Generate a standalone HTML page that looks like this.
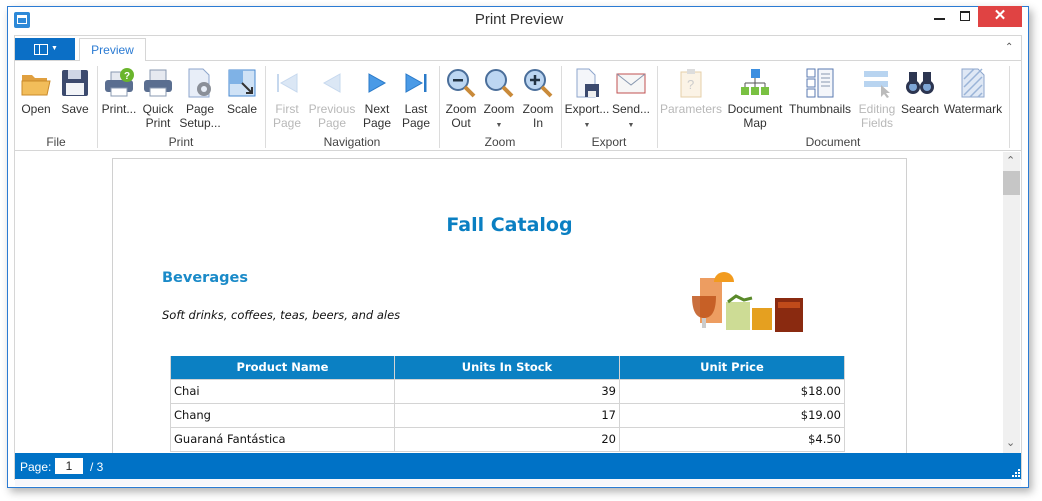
<!DOCTYPE html>
<html><head><meta charset="utf-8"><style>
*{margin:0;padding:0;box-sizing:border-box}
body{width:1042px;height:501px;background:#fff;position:relative;overflow:hidden;font-family:"Liberation Sans",sans-serif;font-size:12px;color:#222}
.a{position:absolute}
.win{left:7px;top:6px;width:1022px;height:482px;border:1px solid #2b7bd3;background:#fff;box-shadow:3px 4px 8px rgba(0,0,0,.3)}
.btn{position:absolute;width:80px;text-align:center;line-height:14px;font-size:12px;color:#333}
.btn svg{display:block;margin:0 auto 3px}
.dis{color:#b8b8b8}
.grp{position:absolute;top:135px;font-size:12px;color:#444;text-align:center}
.sep{position:absolute;top:66px;width:1px;height:82px;background:#dcdcdc}
.arr{font-size:7px;color:#555}
table{border-collapse:collapse;font-family:"DejaVu Sans",sans-serif;font-size:11.5px}
td{border:1px solid #d4d4d4;height:24px;padding:0 3px;color:#111}
th{background:#0b80c3;color:#fff;font-weight:bold;height:23px;border:1px solid #d4d4d4;border-top:none}
</style></head><body>
<div class="a win"></div>
<div class="a" style="left:14px;top:12px;width:16px;height:16px;background:#2d89d8;border-radius:2px"></div>
<div class="a" style="left:17px;top:15px;width:10px;height:9px;border:1.5px solid #fff;border-top-width:3px"></div>
<div class="a" style="left:0;width:1038px;top:11px;text-align:center;font-size:15px;color:#333">Print Preview</div>
<div class="a" style="left:934px;top:18px;width:11px;height:2px;background:#222"></div>
<div class="a" style="left:960px;top:11px;width:10px;height:10px;border:1px solid #222;border-top-width:2px"></div>
<div class="a" style="left:978px;top:6px;width:44px;height:21px;background:#e04343;color:#fff;text-align:center;font-size:15px;line-height:20px;font-weight:bold">✕</div>
<div class="a" style="left:14px;top:35px;width:1008px;height:1px;background:#d6d6d6"></div>
<div class="a" style="left:14px;top:35px;width:1px;height:445px;background:#d6d6d6"></div>
<div class="a" style="left:1021px;top:35px;width:1px;height:445px;background:#d6d6d6"></div>
<div class="a" style="left:15px;top:38px;width:60px;height:22px;background:#0b6fc6"></div>
<div class="a" style="left:34px;top:44px;width:14px;height:11px;border:1.5px solid #fff"></div>
<div class="a" style="left:39px;top:44px;width:1px;height:11px;background:#fff"></div>
<div class="a" style="left:51px;top:45px;color:#fff;font-size:7px">▼</div>
<div class="a" style="left:79px;top:38px;width:67px;height:23px;border:1px solid #d6d6d6;border-bottom:none;background:#fff;color:#2b7bd3;text-align:center;line-height:22px;font-size:12px">Preview</div>
<div class="a" style="left:15px;top:60px;width:64px;height:1px;background:#d6d6d6"></div>
<div class="a" style="left:146px;top:60px;width:875px;height:1px;background:#d6d6d6"></div>
<div class="a" style="left:1005px;top:42px;font-size:10px;color:#555">⌃</div>
<div class="a" style="left:15px;top:150px;width:1006px;height:1px;background:#d6d6d6"></div>
<div class="sep" style="left:97px"></div><div class="sep" style="left:265px"></div><div class="sep" style="left:439px"></div><div class="sep" style="left:561px"></div><div class="sep" style="left:657px"></div><div class="sep" style="left:1009px"></div>
<div class="grp" style="left:15px;width:82px">File</div>
<div class="grp" style="left:97px;width:168px">Print</div>
<div class="grp" style="left:265px;width:174px">Navigation</div>
<div class="grp" style="left:439px;width:122px">Zoom</div>
<div class="grp" style="left:561px;width:96px">Export</div>
<div class="grp" style="left:657px;width:352px">Document</div>
<div class="btn" style="left:-4px;top:67px"><svg width="32" height="32"><path d="M2 8h10l3 3h12v4H2z" fill="#e0a040"/><path d="M2 14h28l-3 14H2z" fill="#f2bd5a" stroke="#c98a2a"/></svg>Open</div>
<div class="btn" style="left:35px;top:67px"><svg width="32" height="32"><rect x="3" y="3" width="26" height="26" rx="2" fill="#3c4a6e"/><rect x="9" y="3" width="13" height="9" fill="#cfd6e6"/><rect x="7" y="16" width="18" height="12" fill="#f2f4f8"/></svg>Save</div>
<div class="btn" style="left:79px;top:67px"><svg width="32" height="32"><rect x="8" y="5" width="16" height="10" fill="#e6e9f0" stroke="#8898b0"/><rect x="2" y="13" width="28" height="12" rx="3" fill="#5a6e90"/><rect x="8" y="21" width="16" height="8" fill="#fff" stroke="#8898b0"/><circle cx="24" cy="8" r="7" fill="#6ab52c"/><text x="21" y="12" font-size="10" fill="#fff" font-family="Liberation Sans" font-weight="bold">?</text></svg>Print...</div>
<div class="btn" style="left:118px;top:67px"><svg width="32" height="32"><rect x="8" y="3" width="16" height="12" fill="#e6e9f0" stroke="#8898b0"/><rect x="2" y="13" width="28" height="12" rx="3" fill="#5a6e90"/><rect x="8" y="21" width="16" height="8" fill="#fff" stroke="#8898b0"/></svg>Quick<br>Print</div>
<div class="btn" style="left:160px;top:67px"><svg width="32" height="32"><path d="M5 2h14l6 6v22H5z" fill="#e8eef8" stroke="#8ea6cc"/><circle cx="20" cy="22" r="7" fill="#8a8f98"/><circle cx="20" cy="22" r="3" fill="#e8eef8"/></svg>Page<br>Setup...</div>
<div class="btn" style="left:202px;top:67px"><svg width="32" height="32"><rect x="3" y="3" width="26" height="26" fill="#cfe2f6" stroke="#4a8ad0"/><rect x="3" y="3" width="14" height="14" fill="#7fb2e6"/><path d="M16 16l10 10M26 20v6h-6" stroke="#333" stroke-width="2" fill="none"/></svg>Scale</div>
<div class="btn dis" style="left:247px;top:67px"><svg width="32" height="32"><rect x="6" y="7" width="2" height="18" fill="#c6d8ee"/><path d="M26 7L10 16l16 9z" fill="#dbe7f5" stroke="#c6d8ee"/></svg>First<br>Page</div>
<div class="btn dis" style="left:292px;top:67px"><svg width="32" height="32"><path d="M24 7L8 16l16 9z" fill="#dbe7f5" stroke="#c6d8ee"/></svg>Previous<br>Page</div>
<div class="btn" style="left:337px;top:67px"><svg width="32" height="32"><path d="M8 7l16 9-16 9z" fill="#4a9ae6" stroke="#2a7ac8"/></svg>Next<br>Page</div>
<div class="btn" style="left:376px;top:67px"><svg width="32" height="32"><path d="M6 7l16 9-16 9z" fill="#4a9ae6" stroke="#2a7ac8"/><rect x="24" y="7" width="2.5" height="18" fill="#2a7ac8"/></svg>Last<br>Page</div>
<div class="btn" style="left:421px;top:67px"><svg width="32" height="32"><circle cx="13" cy="13" r="10" fill="#bcd6f2" stroke="#4a6e9a" stroke-width="2"/><path d="M20 20l9 9" stroke="#c98a3a" stroke-width="4"/><rect x="8" y="12" width="10" height="2.5" fill="#234"/></svg>Zoom<br>Out</div>
<div class="btn" style="left:459px;top:67px"><svg width="32" height="32"><circle cx="13" cy="13" r="10" fill="#bcd6f2" stroke="#4a6e9a" stroke-width="2"/><path d="M20 20l9 9" stroke="#c98a3a" stroke-width="4"/></svg>Zoom<br><span class="arr">▼</span></div>
<div class="btn" style="left:498px;top:67px"><svg width="32" height="32"><circle cx="13" cy="13" r="10" fill="#bcd6f2" stroke="#4a6e9a" stroke-width="2"/><path d="M20 20l9 9" stroke="#c98a3a" stroke-width="4"/><path d="M8 13h10M13 8v10" stroke="#234" stroke-width="2.5"/></svg>Zoom<br>In</div>
<div class="btn" style="left:547px;top:67px"><svg width="32" height="32"><path d="M6 2h12l6 6v22H6z" fill="#f4f6fa" stroke="#8ea6cc"/><rect x="14" y="17" width="14" height="13" fill="#3c4a6e"/><rect x="17" y="24" width="8" height="6" fill="#eee"/></svg>Export...<br><span class="arr">▼</span></div>
<div class="btn" style="left:591px;top:67px"><svg width="32" height="32"><rect x="2" y="7" width="28" height="19" fill="#f6f6f6" stroke="#c05050"/><path d="M2 7l14 11 14-11" stroke="#8898b0" fill="none"/></svg>Send...<br><span class="arr">▼</span></div>
<div class="btn dis" style="left:651px;top:67px"><svg width="32" height="32"><rect x="6" y="5" width="20" height="25" fill="#fbf3e6" stroke="#e6cfa8"/><rect x="12" y="2" width="8" height="5" fill="#ddd"/><text x="12" y="22" font-size="13" fill="#ccc" font-family="Liberation Sans">?</text></svg>Parameters</div>
<div class="btn" style="left:715px;top:67px"><svg width="32" height="32"><rect x="12" y="2" width="9" height="9" fill="#3d8fe0"/><path d="M16 11v5M6 16h20M6 16v4M16 16v4M26 16v4" stroke="#555" fill="none"/><rect x="2" y="20" width="8" height="8" fill="#7ac142"/><rect x="12" y="20" width="8" height="8" fill="#7ac142"/><rect x="22" y="20" width="8" height="8" fill="#7ac142"/></svg>Document<br>Map</div>
<div class="btn" style="left:780px;top:67px"><svg width="32" height="32"><rect x="3" y="2" width="8" height="8" fill="#fff" stroke="#5a7ab0"/><rect x="3" y="12" width="8" height="8" fill="#fff" stroke="#5a7ab0"/><rect x="3" y="22" width="8" height="8" fill="#fff" stroke="#5a7ab0"/><rect x="14" y="2" width="15" height="28" fill="#f4f6fa" stroke="#5a7ab0"/><path d="M17 7h9M17 11h9M17 15h9M17 19h9" stroke="#8898b0"/></svg>Thumbnails</div>
<div class="btn dis" style="left:837px;top:67px"><svg width="32" height="32"><rect x="3" y="4" width="24" height="6" fill="#b8d4f0"/><rect x="3" y="14" width="24" height="6" fill="#b8d4f0"/><path d="M20 18v12l3-3 3 4 2-1-3-4h4z" fill="#bbb"/></svg>Editing<br>Fields</div>
<div class="btn" style="left:880px;top:67px"><svg width="32" height="32"><circle cx="9" cy="20" r="7" fill="#2c3550"/><circle cx="23" cy="20" r="7" fill="#2c3550"/><circle cx="9" cy="20" r="4" fill="#7ea6d6"/><circle cx="23" cy="20" r="4" fill="#7ea6d6"/><rect x="5" y="5" width="8" height="12" fill="#2c3550"/><rect x="19" y="5" width="8" height="12" fill="#2c3550"/></svg>Search</div>
<div class="btn" style="left:933px;top:67px"><svg width="32" height="32"><path d="M5 2h16l6 6v22H5z" fill="#dfe8f5" stroke="#8ea6cc"/><path d="M7 12l10-10M7 20l18-18M7 28l18-18M13 30l12-12M21 30l4-4" stroke="#9ab4d8" stroke-width="1.5"/></svg>Watermark</div>
<div class="a" style="left:15px;top:151px;width:1006px;height:302px;background:#fff;overflow:hidden">
  <div class="a" style="left:97px;top:7px;width:795px;height:310px;border:1px solid #d0d0d0;background:#fff"></div>
</div>
<div class="a" style="left:112px;top:214px;width:795px;text-align:center;font-family:'DejaVu Sans',sans-serif;font-weight:bold;font-size:19px;color:#0a7fc2">Fall Catalog</div>
<div class="a" style="left:162px;top:270px;font-family:'DejaVu Sans',sans-serif;font-weight:bold;font-size:14.5px;color:#1a8ac8">Beverages</div>
<div class="a" style="left:162px;top:308px;font-family:'DejaVu Sans',sans-serif;font-style:italic;font-size:11.5px;color:#111">Soft drinks, coffees, teas, beers, and ales</div>
<svg class="a" style="left:690px;top:268px" width="120" height="76">
<rect x="10" y="10" width="22" height="45" fill="#e8853a" opacity=".8"/><path d="M24 14a10 10 0 0 1 20 0z" fill="#f29b1e"/>
<path d="M2 28h24c0 18-6 22-12 22S2 46 2 28z" fill="#c0561c" opacity=".85"/><rect x="12" y="50" width="4" height="10" fill="#ccc"/>
<rect x="36" y="34" width="24" height="28" fill="#c8d88a" opacity=".9"/><path d="M38 34l8-6 8 4 8-2" stroke="#5a8a2a" stroke-width="3" fill="none"/>
<rect x="62" y="40" width="20" height="22" fill="#e5a020"/>
<rect x="85" y="30" width="28" height="34" fill="#8a2a10"/><rect x="88" y="34" width="22" height="6" fill="#c04a1a"/>
</svg>
<table class="a" style="left:170px;top:356px;width:675px">
<tr><th style="width:224px">Product Name</th><th style="width:225px">Units In Stock</th><th>Unit Price</th></tr>
<tr><td>Chai</td><td style="text-align:right">39</td><td style="text-align:right">$18.00</td></tr>
<tr><td>Chang</td><td style="text-align:right">17</td><td style="text-align:right">$19.00</td></tr>
<tr><td>Guaraná Fantástica</td><td style="text-align:right">20</td><td style="text-align:right">$4.50</td></tr>
</table>
<div class="a" style="left:1003px;top:152px;width:17px;height:301px;background:#f0f0f0"></div>
<div class="a" style="left:1003px;top:171px;width:17px;height:24px;background:#c6c6c6"></div>
<div class="a" style="left:1006px;top:154px;font-size:11px;color:#666">⌃</div>
<div class="a" style="left:1006px;top:436px;font-size:11px;color:#666">⌄</div>
<div class="a" style="left:15px;top:453px;width:1006px;height:26px;background:#0072c6"></div>
<div class="a" style="left:20px;top:460px;color:#fff;font-size:12px">Page:</div>
<div class="a" style="left:55px;top:458px;width:28px;height:16px;background:#fff;color:#222;text-align:center;font-size:12px;line-height:16px">1</div>
<div class="a" style="left:90px;top:460px;color:#fff;font-size:12px">/ 3</div>
<svg class="a" style="left:1011px;top:468px" width="10" height="10"><g fill="#fff"><rect x="7" y="1" width="2" height="2"/><rect x="4" y="4" width="2" height="2"/><rect x="7" y="4" width="2" height="2"/><rect x="1" y="7" width="2" height="2"/><rect x="4" y="7" width="2" height="2"/><rect x="7" y="7" width="2" height="2"/></g></svg>
<div class="a" style="left:15px;top:479px;width:1006px;height:7px;background:#f7f7fb"></div>
</body></html>
